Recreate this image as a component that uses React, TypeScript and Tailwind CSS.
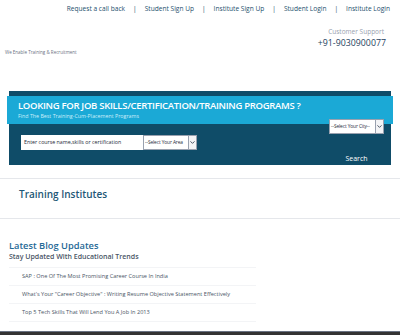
import { ChevronDown } from 'lucide-react'

const navLinks = ['Request a call back', 'Student Sign Up', 'Institute Sign Up', 'Student Login', 'Institute Login']

const posts = [
  'SAP : One Of The Most Promising Career Course In India',
  'What\'s Your "Career Objective" : Writing Resume Objective Statement Effectively',
  'Top 5 Tech Skills That Will Lend You A Job In 2013',
]

function FakeSelect({ label, className }: { label: string; className: string }) {
  return (
    <div className={`flex items-center bg-white border border-gray-400 ${className}`}>
      <span className="flex-1 overflow-hidden whitespace-nowrap pl-[1px] text-[4.8px] tracking-[-0.1px] text-gray-800">{label}</span>
      <span className="flex h-full w-[8px] shrink-0 items-center justify-center border-l border-gray-400 bg-gray-100">
        <ChevronDown size={7} strokeWidth={3} className="text-gray-700" />
      </span>
    </div>
  )
}

export default function App() {
  return (
    <div className="relative h-[335px] w-[400px] overflow-hidden bg-white font-['Open_Sans',sans-serif]">
      {/* top links */}
      <div className="flex h-[18px] items-center justify-end pr-[10px] text-[6.6px] text-[#1d4f6e]">
        {navLinks.map((l, i) => (
          <span key={l} className="flex items-center">
            {i > 0 && <span className="mx-[8px]">|</span>}
            <span>{l}</span>
          </span>
        ))}
      </div>

      {/* header */}
      <div className="flex items-end justify-between px-[5px] pt-[9px]">
        <div className="mb-[-6px] text-[4.5px] text-gray-500">We Enable Training &amp; Recruitment</div>
        <div className="flex flex-col items-end pr-[9px]">
          <span className="mr-[2px] text-[6.5px] leading-[10px] text-gray-400">Customer Support</span>
          <span className="text-[8.8px] leading-[13px] text-[#1d3f5e]">+91-9030900077</span>
        </div>
      </div>

      {/* search banner */}
      <div className="mx-[9px] mt-[41px] h-[74px] bg-[#0f4c68] pt-[5px]">
        <div className="-mx-[2px] flex h-[28px] flex-col justify-center bg-[#1ba9d6] pl-[11px]">
          <div className="text-[9.5px] leading-[12px] font-semibold tracking-[-0.3px] text-white">
            LOOKING FOR JOB SKILLS/CERTIFICATION/TRAINING PROGRAMS ?
          </div>
          <div className="text-[5.3px] leading-[8px] text-[#cdeefa]">Find The Best Training-Cum-Placement Programs</div>
        </div>
        <div className="flex items-start pl-[12px] pr-[7px]">
          <div className="mt-[11px] flex h-[15px] w-[122px] items-center bg-white pl-[3px] text-[5.3px] text-gray-800">
            Enter course name,skills or certification
          </div>
          <FakeSelect label="--Select Your Area" className="mt-[11px] h-[15px] w-[54px]" />
          <div className="ml-auto flex flex-col items-center">
            <FakeSelect label="--Select Your City--" className="-mt-[5px] h-[15px] w-[55px]" />
            <span className="mt-[20px] text-[7px] text-white">Search</span>
          </div>
        </div>
      </div>

      {/* training institutes */}
      <div className="mt-[13px] border-y border-gray-200 pt-[5px] pb-[14px] pl-[19px]">
        <h2 className="text-[10px] leading-[20px] font-semibold text-[#1d5776]">Training Institutes</h2>
      </div>

      {/* blog */}
      <div className="px-[9px] pt-[21px]">
        <h3 className="text-[9.3px] leading-[12px] font-semibold text-[#1f6996]">Latest Blog Updates</h3>
        <div className="text-[7px] leading-[10px] font-semibold text-gray-600">Stay Updated With Educational Trends</div>
        <ul className="mt-[5px] w-[247px] border-t border-gray-100">
          {posts.map(p => (
            <li key={p} className="border-b border-gray-100 py-[4px] pl-[13px] text-[5.6px] leading-[9px] text-gray-600">
              {p}
            </li>
          ))}
        </ul>
      </div>

      {/* footer strip */}
      <div className="absolute bottom-0 left-0 h-[4px] w-full border-t border-gray-500 bg-[#333]" />
    </div>
  )
}
